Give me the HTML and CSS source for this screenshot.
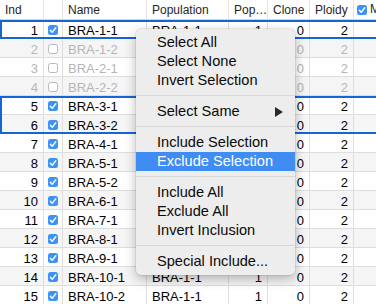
FILE: index.html
```html
<!DOCTYPE html>
<html lang="en">
<head>
<meta charset="UTF-8">
<title>Individuals</title>
<link rel="stylesheet" href="styles.css">
</head>
<body>

<div class="sheet">

  <div class="row head">
    <div class="cell">Ind</div>
    <div class="cell"></div>
    <div class="cell">Name</div>
    <div class="cell">Population</div>
    <div class="cell">Pop…</div>
    <div class="cell">Clone</div>
    <div class="cell">Ploidy</div>
    <div class="cell tick"><span class="box on"><svg viewBox="0 0 10 10"><polyline points="2.3,5.2 4.2,7.2 7.8,2.8"/></svg></span>M</div>
  </div>

  <div class="sel">
    <div class="row">
      <div class="cell num">1</div>
      <div class="cell chk"><span class="box on"><svg viewBox="0 0 10 10"><polyline points="2.3,5.2 4.2,7.2 7.8,2.8"/></svg></span></div>
      <div class="cell">BRA-1-1</div>
      <div class="cell">BRA-1-1</div>
      <div class="cell num">1</div>
      <div class="cell num">0</div>
      <div class="cell num">2</div>
      <div class="cell"></div>
    </div>
  </div>

  <div class="row alt off">
    <div class="cell num">2</div>
    <div class="cell chk"><span class="box"></span></div>
    <div class="cell">BRA-1-2</div>
    <div class="cell">BRA-1-1</div>
    <div class="cell num">1</div>
    <div class="cell num">0</div>
    <div class="cell num">2</div>
    <div class="cell"></div>
  </div>
  <div class="row off">
    <div class="cell num">3</div>
    <div class="cell chk"><span class="box"></span></div>
    <div class="cell">BRA-2-1</div>
    <div class="cell">BRA-1-1</div>
    <div class="cell num">1</div>
    <div class="cell num">0</div>
    <div class="cell num">2</div>
    <div class="cell"></div>
  </div>
  <div class="row alt off">
    <div class="cell num">4</div>
    <div class="cell chk"><span class="box"></span></div>
    <div class="cell">BRA-2-2</div>
    <div class="cell">BRA-1-1</div>
    <div class="cell num">1</div>
    <div class="cell num">0</div>
    <div class="cell num">2</div>
    <div class="cell"></div>
  </div>

  <div class="sel">
    <div class="row">
      <div class="cell num">5</div>
      <div class="cell chk"><span class="box on"><svg viewBox="0 0 10 10"><polyline points="2.3,5.2 4.2,7.2 7.8,2.8"/></svg></span></div>
      <div class="cell">BRA-3-1</div>
      <div class="cell">BRA-1-1</div>
      <div class="cell num">1</div>
      <div class="cell num">0</div>
      <div class="cell num">2</div>
      <div class="cell"></div>
    </div>
    <div class="row alt">
      <div class="cell num">6</div>
      <div class="cell chk"><span class="box on"><svg viewBox="0 0 10 10"><polyline points="2.3,5.2 4.2,7.2 7.8,2.8"/></svg></span></div>
      <div class="cell">BRA-3-2</div>
      <div class="cell">BRA-1-1</div>
      <div class="cell num">1</div>
      <div class="cell num">0</div>
      <div class="cell num">2</div>
      <div class="cell"></div>
    </div>
  </div>

  <div class="row">
    <div class="cell num">7</div>
    <div class="cell chk"><span class="box on"><svg viewBox="0 0 10 10"><polyline points="2.3,5.2 4.2,7.2 7.8,2.8"/></svg></span></div>
    <div class="cell">BRA-4-1</div>
    <div class="cell">BRA-1-1</div>
    <div class="cell num">1</div>
    <div class="cell num">0</div>
    <div class="cell num">2</div>
    <div class="cell"></div>
  </div>
  <div class="row alt">
    <div class="cell num">8</div>
    <div class="cell chk"><span class="box on"><svg viewBox="0 0 10 10"><polyline points="2.3,5.2 4.2,7.2 7.8,2.8"/></svg></span></div>
    <div class="cell">BRA-5-1</div>
    <div class="cell">BRA-1-1</div>
    <div class="cell num">1</div>
    <div class="cell num">0</div>
    <div class="cell num">2</div>
    <div class="cell"></div>
  </div>
  <div class="row">
    <div class="cell num">9</div>
    <div class="cell chk"><span class="box on"><svg viewBox="0 0 10 10"><polyline points="2.3,5.2 4.2,7.2 7.8,2.8"/></svg></span></div>
    <div class="cell">BRA-5-2</div>
    <div class="cell">BRA-1-1</div>
    <div class="cell num">1</div>
    <div class="cell num">0</div>
    <div class="cell num">2</div>
    <div class="cell"></div>
  </div>
  <div class="row alt">
    <div class="cell num">10</div>
    <div class="cell chk"><span class="box on"><svg viewBox="0 0 10 10"><polyline points="2.3,5.2 4.2,7.2 7.8,2.8"/></svg></span></div>
    <div class="cell">BRA-6-1</div>
    <div class="cell">BRA-1-1</div>
    <div class="cell num">1</div>
    <div class="cell num">0</div>
    <div class="cell num">2</div>
    <div class="cell"></div>
  </div>
  <div class="row">
    <div class="cell num">11</div>
    <div class="cell chk"><span class="box on"><svg viewBox="0 0 10 10"><polyline points="2.3,5.2 4.2,7.2 7.8,2.8"/></svg></span></div>
    <div class="cell">BRA-7-1</div>
    <div class="cell">BRA-1-1</div>
    <div class="cell num">1</div>
    <div class="cell num">0</div>
    <div class="cell num">2</div>
    <div class="cell"></div>
  </div>
  <div class="row alt">
    <div class="cell num">12</div>
    <div class="cell chk"><span class="box on"><svg viewBox="0 0 10 10"><polyline points="2.3,5.2 4.2,7.2 7.8,2.8"/></svg></span></div>
    <div class="cell">BRA-8-1</div>
    <div class="cell">BRA-1-1</div>
    <div class="cell num">1</div>
    <div class="cell num">0</div>
    <div class="cell num">2</div>
    <div class="cell"></div>
  </div>
  <div class="row">
    <div class="cell num">13</div>
    <div class="cell chk"><span class="box on"><svg viewBox="0 0 10 10"><polyline points="2.3,5.2 4.2,7.2 7.8,2.8"/></svg></span></div>
    <div class="cell">BRA-9-1</div>
    <div class="cell">BRA-1-1</div>
    <div class="cell num">1</div>
    <div class="cell num">0</div>
    <div class="cell num">2</div>
    <div class="cell"></div>
  </div>
  <div class="row alt">
    <div class="cell num">14</div>
    <div class="cell chk"><span class="box on"><svg viewBox="0 0 10 10"><polyline points="2.3,5.2 4.2,7.2 7.8,2.8"/></svg></span></div>
    <div class="cell">BRA-10-1</div>
    <div class="cell">BRA-1-1</div>
    <div class="cell num">1</div>
    <div class="cell num">0</div>
    <div class="cell num">2</div>
    <div class="cell"></div>
  </div>
  <div class="row">
    <div class="cell num">15</div>
    <div class="cell chk"><span class="box on"><svg viewBox="0 0 10 10"><polyline points="2.3,5.2 4.2,7.2 7.8,2.8"/></svg></span></div>
    <div class="cell">BRA-10-2</div>
    <div class="cell">BRA-1-1</div>
    <div class="cell num">1</div>
    <div class="cell num">0</div>
    <div class="cell num">2</div>
    <div class="cell"></div>
  </div>

  <!-- context menu over the table -->
  <div class="menu">
    <div class="item">Select All</div>
    <div class="item">Select None</div>
    <div class="item">Invert Selection</div>
    <div class="sep"></div>
    <div class="item">Select Same<svg class="arrow" viewBox="0 0 8 10"><polygon points="0,0 8,5 0,10"/></svg></div>
    <div class="sep"></div>
    <div class="item">Include Selection</div>
    <div class="item hot">Exclude Selection</div>
    <div class="sep"></div>
    <div class="item">Include All</div>
    <div class="item">Exclude All</div>
    <div class="item">Invert Inclusion</div>
    <div class="sep"></div>
    <div class="item">Special Include...</div>
  </div>

</div>

</body>
</html>
```

FILE: styles.css
```css
body {
  margin: 0;
  overflow: hidden;
  background: #FFFFFF;
  font-family: "Liberation Sans", Arial, sans-serif;
}

.sheet {
  position: relative;
  width: 430px;
}

.row {
  display: grid;
  grid-template-columns: 44px 19px 84px 82px 39px 42px 44px 76px;
  height: 19px;
  box-sizing: border-box;
  border-bottom: 1px solid #dedede;
  font-size: 13px;
  color: #000;
}

.row.alt {
  background: #f5f5f5;
}

.row.off {
  color: #b5b5b5;
}

.cell {
  border-right: 1px solid #dedede;
  padding: 3px 5px 0 5px;
  line-height: 15px;
  white-space: nowrap;
  overflow: hidden;
}

.cell.num {
  text-align: right;
  padding-right: 5px;
}

.cell.chk {
  padding: 0;
  display: flex;
  align-items: center;
  justify-content: center;
}

.head {
  height: 20px;
  background: #fff;
  font-size: 12px;
  color: #262626;
  border-bottom: 1px solid #d4d4d4;
}

.head .cell {
  border-right: 1px solid #e4e4e4;
  padding-top: 3px;
}

.head .tick {
  display: flex;
  align-items: center;
  gap: 3px;
  padding-left: 3px;
  padding-top: 0;
}

.box {
  display: inline-block;
  width: 10px;
  height: 10px;
  box-sizing: border-box;
  border: 1px solid #b9b9b9;
  border-radius: 2.5px;
  background: #fff;
  margin-top: 1px;
}

.box.on {
  border: none;
  background: #3b93f7;
}

.box svg {
  display: block;
  width: 10px;
  height: 10px;
  fill: none;
  stroke: #fff;
  stroke-width: 1.4;
  stroke-linecap: round;
  stroke-linejoin: round;
}

.sel {
  outline: 2px solid #1565d4;
  outline-offset: -2px;
}

.menu {
  position: absolute;
  left: 136px;
  top: 29px;
  width: 159px;
  padding: 4px 0;
  background: #ededed;
  border-radius: 5px;
  box-shadow: 0 0 0 0.5px rgba(0, 0, 0, 0.12), 0 4px 12px rgba(0, 0, 0, 0.28);
  font-size: 14.6px;
  color: #0a0a0a;
}

.item {
  position: relative;
  height: 19px;
  line-height: 19px;
  padding-left: 21px;
  white-space: nowrap;
}

.item.hot {
  background: #3f8cf3;
  color: #fff;
}

.arrow {
  position: absolute;
  right: 12px;
  top: 5px;
  width: 8px;
  height: 10px;
  fill: #2a2a2a;
}

.sep {
  height: 1px;
  background: #d8d8d8;
  margin: 5px 0 6px 0;
}
```
